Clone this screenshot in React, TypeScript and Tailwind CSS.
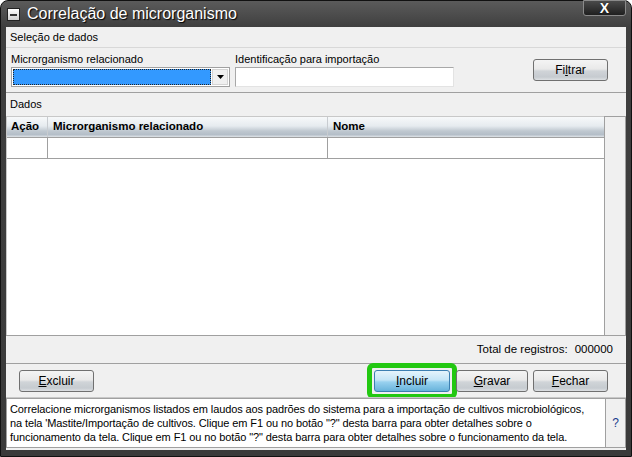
import type { ReactNode } from 'react';

const FONT = "font-['Liberation_Sans',Arial,sans-serif]";

function Mnemonic({ text, index }: { text: string; index: number }) {
  return (
    <span>
      {text.slice(0, index)}
      <span className="underline">{text[index]}</span>
      {text.slice(index + 1)}
    </span>
  );
}

function WinButton({ children, primary = false, width }: { children: ReactNode; primary?: boolean; width: string }) {
  return (
    <button
      type="button"
      className={`${width} h-[22px] rounded-[3px] border text-[12px] text-black flex items-center justify-center ${
        primary
          ? 'border-[#3c7fb1] bg-[linear-gradient(to_bottom,#e5f4fc_0%,#c4e5f6_45%,#98d1ef_55%,#68b3db_100%)]'
          : 'border-[#707070] bg-[linear-gradient(to_bottom,#f4f4f4_0%,#e9e9e9_45%,#d0d4d8_55%,#c6cbd0_85%,#dde0e3_100%)]'
      }`}
    >
      {children}
    </button>
  );
}

const headerBg =
  'bg-[linear-gradient(to_bottom,#f7f9fa_0%,#e6ebef_45%,#bfc8d0_70%,#b4bec8_88%,#dfe4e8_100%)]';

export default function App() {
  return (
    <div className={`w-[632px] h-[457px] bg-white ${FONT}`}>
      <div className="w-full h-full rounded-t-[8px] border border-[#111] bg-[linear-gradient(to_bottom,#5b5b5b_0px,#3f3f3f_26px,#3a3a3a_100%)] flex flex-col">
        {/* title bar */}
        <div className="h-[26px] flex items-start shrink-0">
          <div className="flex items-center h-full pl-[6px]">
            <div className="w-[13px] h-[13px] mt-[1px] border border-[#222] bg-[linear-gradient(to_bottom,#ffffff,#cfcfcf)] flex items-center justify-center">
              <div className="w-[7px] h-[2px] bg-[#333]" />
            </div>
            <span className="ml-[7px] text-[16px] leading-none text-white [text-shadow:1px_1px_1px_#000]">
              Correlação de microrganismo
            </span>
          </div>
          <div className="ml-auto mr-[5px] w-[43px] h-[16px] -mt-px rounded-b-[3px] border border-[#8a8a8a] bg-[linear-gradient(to_bottom,#4a4a4a,#1f1f1f)] flex items-center justify-center">
            <span className="text-white font-bold text-[14px] leading-none [text-shadow:0_0_1px_#000]">X</span>
          </div>
        </div>

        {/* content */}
        <div className="mx-[5px] h-[423px] bg-[#f0f0f0] flex flex-col text-[11px] text-black">
          <div className="h-[21px] border-b border-[#d8d8d8] flex items-center pl-[4px]">Seleção de dados</div>

          <div className="h-[45px] border-b border-[#a0a0a0] flex items-start">
            <div className="ml-[5px] mt-[3px] w-[219px] flex flex-col">
              <span className="h-[16px] leading-[16px]">Microrganismo relacionado</span>
              <div className="h-[20px] border border-[#a0a0a0] bg-white p-[1px] flex">
                <div className="flex-1 bg-[#3399ff] border border-dotted border-[#222]" />
                <div className="w-[16px] ml-[1px] bg-[#f0f0f0] border border-[#d4d4d4] flex items-center justify-center">
                  <svg width="7" height="4" viewBox="0 0 7 4">
                    <path d="M0 0h7L3.5 4z" fill="#000" />
                  </svg>
                </div>
              </div>
            </div>
            <div className="ml-[5px] mt-[3px] w-[219px] flex flex-col">
              <span className="h-[16px] leading-[16px]">Identificação para importação</span>
              <div className="h-[20px] border border-[#a8a8a8] border-r-[#e3e3e3] border-b-[#e3e3e3] bg-white" />
            </div>
            <div className="ml-auto mr-[18px] mt-[11px]">
              <WinButton width="w-[75px]">
                <Mnemonic text="Filtrar" index={2} />
              </WinButton>
            </div>
          </div>

          <div className="h-[23px] flex items-center pl-[4px]">Dados</div>

          {/* grid */}
          <div className="h-[220px] border-b border-[#a0a0a0] flex">
            <div className="flex-1 flex flex-col bg-white border-t border-l border-[#c8c8c8]">
              <div className={`h-[20px] flex text-[11.5px] font-bold ${headerBg}`}>
                <div className="w-[41px] pl-[4px] flex items-center border-r border-[#c8ccd0]">Ação</div>
                <div className="w-[280px] pl-[5px] flex items-center border-r border-[#c8ccd0]">Microrganismo relacionado</div>
                <div className="flex-1 pl-[5px] flex items-center">Nome</div>
              </div>
              <div className="h-[22px] flex border-b border-t border-[#a0a0a0]">
                <div className="w-[41px] border-r border-[#a0a0a0]" />
                <div className="w-[280px] border-r border-[#a0a0a0]" />
                <div className="flex-1" />
              </div>
              <div className="flex-1" />
            </div>
            <div className="w-[22px] border-l border-t border-r border-[#a0a0a0] bg-[#f0f0f0]" />
          </div>

          <div className="h-[27px] flex items-center justify-end pr-[13px] text-[11.5px]">
            <span>Total de registros:</span>
            <span className="ml-[7px]">000000</span>
          </div>

          <div className="h-[34px] border-t border-[#a0a0a0] flex items-center">
            <div className="ml-[13px]">
              <WinButton width="w-[75px]">
                <Mnemonic text="Excluir" index={0} />
              </WinButton>
            </div>
            <div className="ml-auto rounded-[6px] border-[5px] border-[#22c811] p-[2px] flex">
              <WinButton primary width="w-[76px]">
                <Mnemonic text="Incluir" index={0} />
              </WinButton>
            </div>
            <div className="ml-[-1px]">
              <WinButton width="w-[72px]">
                <Mnemonic text="Gravar" index={0} />
              </WinButton>
            </div>
            <div className="ml-[5px] mr-[18px]">
              <WinButton width="w-[75px]">
                <Mnemonic text="Fechar" index={0} />
              </WinButton>
            </div>
          </div>

          <div className="h-[53px] flex border-t border-[#c8c8c8] pb-[2px]">
            <div className="flex-1 bg-white border border-[#a0a0a0] pl-[3px] pt-[3px] text-[11px] tracking-[-0.1px] leading-[14px] whitespace-nowrap overflow-hidden">
              Correlacione microrganismos listados em laudos aos padrões do sistema para a importação de cultivos microbiológicos,
              <br />
              na tela 'Mastite/Importação de cultivos. Clique em F1 ou no botão "?" desta barra para obter detalhes sobre o
              <br />
              funcionamento da tela. Clique em F1 ou no botão "?" desta barra para obter detalhes sobre o funcionamento da tela.
            </div>
            <div className="w-[20px] border border-[#a0a0a0] border-l-0 flex items-center justify-center text-[12px] text-[#1a3b8c]">
              ?
            </div>
          </div>
        </div>
      </div>
    </div>
  );
}
